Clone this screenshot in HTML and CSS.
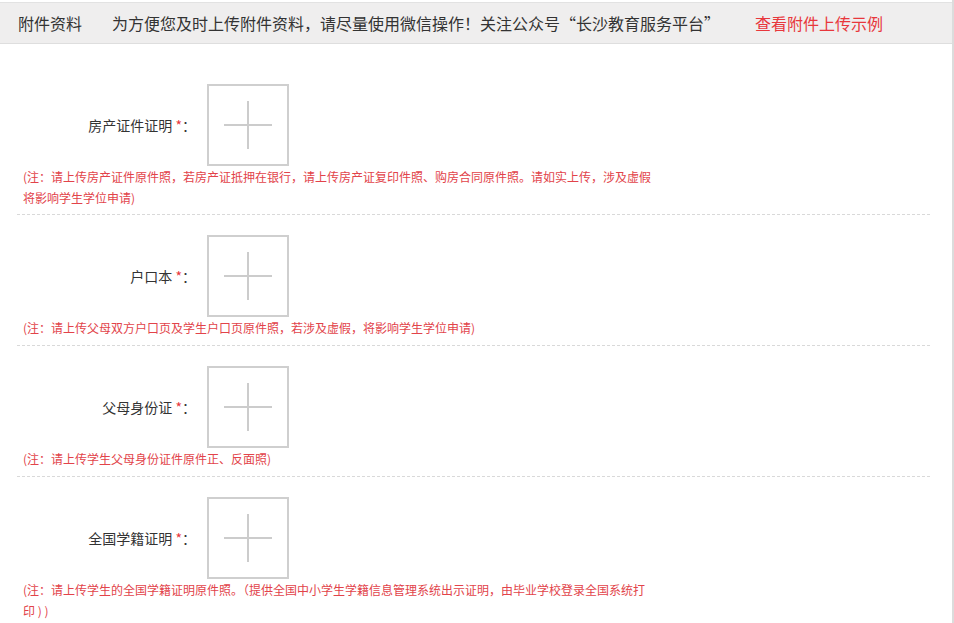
FILE: index.html
```html
<!DOCTYPE html>
<html lang="zh-CN">
<head>
<meta charset="utf-8">
<title>附件资料</title>
<link rel="stylesheet" href="styles.css">
</head>
<body>
<div class="page">
  <div class="header">
    <span class="header-title">附件资料</span>
    <span class="header-tip">为方便您及时上传附件资料，请尽量使用微信操作！关注公众号“长沙教育服务平台”</span>
    <a class="header-link" href="#">查看附件上传示例</a>
  </div>
  <div class="form">
    <div class="section">
      <div class="row">
        <div class="label">房产证件证明<span class="req"> *</span>：</div>
        <div class="upload"><span class="plus"></span></div>
      </div>
      <p class="note">(注：请上传房产证件原件照，若房产证抵押在银行，请上传房产证复印件照、购房合同原件照。请如实上传，涉及虚假将影响学生学位申请)</p>
    </div>
    <div class="section">
      <div class="row">
        <div class="label">户口本<span class="req"> *</span>：</div>
        <div class="upload"><span class="plus"></span></div>
      </div>
      <p class="note">(注：请上传父母双方户口页及学生户口页原件照，若涉及虚假，将影响学生学位申请)</p>
    </div>
    <div class="section">
      <div class="row">
        <div class="label">父母身份证<span class="req"> *</span>：</div>
        <div class="upload"><span class="plus"></span></div>
      </div>
      <p class="note">(注：请上传学生父母身份证件原件正、反面照)</p>
    </div>
    <div class="section last">
      <div class="row">
        <div class="label">全国学籍证明<span class="req"> *</span>：</div>
        <div class="upload"><span class="plus"></span></div>
      </div>
      <p class="note">(注：请上传学生的全国学籍证明原件照。（提供全国中小学生学籍信息管理系统出示证明，由毕业学校登录全国系统打印 ) )</p>
    </div>
  </div>
</div>
</body>
</html>
```

FILE: styles.css
```css
* { box-sizing: border-box; }
html, body {
  margin: 0;
  padding: 0;
  background: #fff;
}
body {
  font-family: "Microsoft YaHei", "Noto Sans CJK SC", "Noto Sans", sans-serif;
  color: #333;
  overflow: hidden;
}
.page {
  width: 954px;
  height: 623px;
  border-right: 2px solid #dcdcdc;
  overflow: hidden;
}
.header {
  margin-top: 2px;
  height: 42px;
  background: #efeeee;
  border-top: 1px solid #e2e2e2;
  border-bottom: 1px solid #dedede;
  display: flex;
  align-items: center;
  padding-left: 18px;
  font-size: 16px;
  line-height: 20px;
  white-space: nowrap;
}
.header-title { color: #333; }
.header-tip { margin-left: 30px; color: #333; }
.header-link {
  margin-left: 35px;
  color: #e8373c;
  text-decoration: none;
}
.form {
  padding: 20px 22px 0 17px;
}
.section {
  padding: 20px 0 6px;
  border-bottom: 1px dashed #d9d9d9;
}
.section + .section { padding-bottom: 7px; }
.section.last { border-bottom: none; }
.row {
  display: flex;
  align-items: center;
}
.label {
  width: 179px;
  text-align: right;
  font-size: 14px;
  line-height: 20px;
  color: #333;
  white-space: nowrap;
}
.req { color: #e8373c; }
.upload {
  margin-left: 11px;
  width: 82px;
  height: 82px;
  border: 2px solid #cfcfcf;
  position: relative;
}
.plus {
  position: absolute;
  left: 15px;
  top: 15px;
  width: 48px;
  height: 48px;
}
.plus::before, .plus::after {
  content: "";
  position: absolute;
  background: #cccccc;
}
.plus::before {
  left: 0;
  top: 23px;
  width: 48px;
  height: 2px;
}
.plus::after {
  left: 23px;
  top: 0;
  width: 2px;
  height: 48px;
}
.note {
  margin: 0;
  padding-left: 6px;
  width: 638px;
  font-size: 12px;
  line-height: 21px;
  color: #e2434a;
}
```
